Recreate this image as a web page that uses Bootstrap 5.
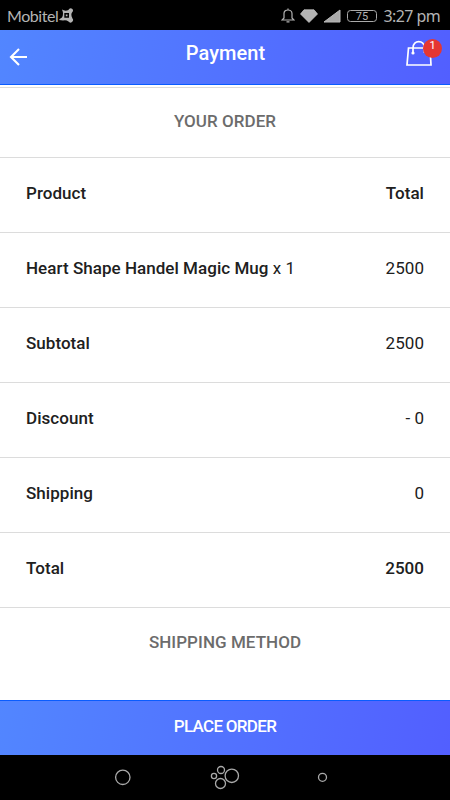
<!DOCTYPE html>
<html lang="en">
<head>
<meta charset="utf-8">
<meta name="viewport" content="width=device-width, initial-scale=1">
<title>Payment</title>
<link href="https://cdn.jsdelivr.net/npm/bootstrap@5.3.0/dist/css/bootstrap.min.css" rel="stylesheet">
<style>
body { font-family: Roboto, sans-serif; color: #202020; font-size: 17px; line-height: 24px; }
svg { display: block; flex: none; }
.screen { height: 800px; }
.status { height: 30px; background: #000; color: #b4b4b4; font-family: Lato, sans-serif; padding: 1px 10px 0 7px; }
.carrier { font-size: 16px; letter-spacing: -.45px; }
.clock { font-family: "Noto Sans", sans-serif; font-size: 16px; letter-spacing: -.6px; }
.brand-bar { height: 55px; background: linear-gradient(100deg, #5286ff, #525fff); color: #fff; }
.top-bar { border-bottom: 1px solid #0a5cff; padding: 0 8px 0 9px; }
.page-title { font-size: 20px; font-weight: 500; letter-spacing: .1px; padding-bottom: 8px; }
.bag { width: 37px; height: 32px; margin-bottom: 3px; }
.bag-count { width: 19px; height: 19px; background: #e53632; font-size: 11px; line-height: 13px; top: -1px; right: 0; }
.order { padding-top: 2px; }
.order-head { height: 71px; border-top: 1px solid #dcdcdc; border-bottom: 1px solid #dcdcdc; padding-bottom: 3px; }
.section-title { color: #6c6c6c; font-weight: 500; font-size: 17px; letter-spacing: .05px; }
.order-row { height: 75px; border-bottom: 1px solid #dcdcdc; padding: 0 26px 4px; letter-spacing: .04px; }
.medium { font-weight: 500; }
.ship-head { padding-top: 22px; }
.place { border: 0; border-top: 1px solid #0a5cff; font-size: 17px; font-weight: 500; letter-spacing: -.7px; padding-bottom: 5px; }
.system-nav { height: 45px; background: #000; }
</style>
<script src="https://cdn.jsdelivr.net/npm/bootstrap@5.3.0/dist/js/bootstrap.bundle.min.js"></script>
</head>
<body class="bg-white overflow-hidden">
<div class="screen d-flex flex-column">
  <div class="status d-flex align-items-center justify-content-between">
    <div class="d-flex align-items-center">
      <span class="carrier">Mobitel</span>
      <svg width="16" height="15" viewBox="0 0 16 15"><path fill="#b4b4b4" fill-rule="evenodd" d="M4 1.500Q7 3.500 10.500 2A2.300 2.300 0 1 1 14 4.500Q12.500 7 14.500 10.500A2.300 2.300 0 1 1 10.500 13.500Q8 11.500 5 12.500L1 12Q1.500 10.500 4 9.500Q6 6 4 1.500ZM6.300 5V9.700H11V5ZM7.800 6.500H9.500V8.200H7.800Z"/></svg>
    </div>
    <div class="d-flex align-items-center">
      <svg width="14" height="15" viewBox="0 0 14 15" fill="none" stroke="#b4b4b4" stroke-width="1.200"><path d="M1 12H13L11 10V5.500C11 .8 3 .8 3 5.500V10ZM7 2V.5M5.500 13.800H8.500"/></svg>
      <svg class="ms-1" width="20" height="14" viewBox="0 0 20 14"><path fill="#b4b4b4" stroke="#d0d0d0" stroke-width=".7" d="M5 .8H15L18.500 5L10 13.500L1.500 5Z"/></svg>
      <svg class="ms-1" width="18" height="14" viewBox="0 0 18 14"><path fill="#aaa" stroke="#bbb" d="M1 13L17 1V13Z"/></svg>
      <svg style="margin:0 5px" width="32" height="14" viewBox="0 0 32 14"><rect x="1.500" y="1.500" width="29" height="11" rx="3" fill="none" stroke="#aaa"/><text x="16" y="10.900" fill="#b4b4b4" font-family="Roboto, sans-serif" font-size="11" text-anchor="middle">75</text></svg>
      <span class="clock">3:27 pm</span>
    </div>
  </div>

  <nav class="brand-bar top-bar d-flex align-items-center justify-content-between">
    <svg width="37" height="20" viewBox="0 0 37 20" fill="none" stroke="#fff" stroke-width="2.100"><path d="M18 10H3M10 2L2 10L10 18"/></svg>
    <span class="page-title">Payment</span>
    <div class="bag position-relative">
      <svg width="37" height="32" viewBox="0 0 37 32" fill="none" stroke="#fff" stroke-width="1.700"><path d="M3.500 8H25L26 25H2ZM8 13V8C8 -.500 19.500 -.500 19.500 8V13"/><circle cx="8" cy="13" r="1.600" fill="#fff" stroke="none"/></svg>
      <span class="bag-count position-absolute rounded-circle text-center">1</span>
    </div>
  </nav>

  <main class="order flex-grow-1">
    <div class="order-head d-flex align-items-center justify-content-center"><span class="section-title">YOUR ORDER</span></div>
    <div class="order-row medium d-flex align-items-center justify-content-between"><span>Product</span><span>Total</span></div>
    <div class="order-row d-flex align-items-center justify-content-between"><span><span class="medium">Heart Shape Handel Magic Mug</span> x 1</span><span>2500</span></div>
    <div class="order-row d-flex align-items-center justify-content-between"><span class="medium">Subtotal</span><span>2500</span></div>
    <div class="order-row d-flex align-items-center justify-content-between"><span class="medium">Discount</span><span>- 0</span></div>
    <div class="order-row d-flex align-items-center justify-content-between"><span class="medium">Shipping</span><span>0</span></div>
    <div class="order-row medium d-flex align-items-center justify-content-between"><span>Total</span><span>2500</span></div>
    <div class="ship-head text-center section-title">SHIPPING METHOD</div>
  </main>

  <button class="brand-bar place w-100" type="button">PLACE ORDER</button>
  <div class="system-nav d-flex justify-content-center">
    <svg width="250" height="45" viewBox="0 5 250 45" fill="none" stroke="#aaa" stroke-width="1.300"><circle cx="22.800" cy="27.300" r="7.200"/><circle cx="131.800" cy="25.800" r="6.700"/><circle cx="120.500" cy="33.500" r="5"/><circle cx="121" cy="20" r="3.500"/><circle cx="114" cy="26" r="2.600"/><circle cx="222.500" cy="27.300" r="4"/></svg>
  </div>
</div>
</body>
</html>
